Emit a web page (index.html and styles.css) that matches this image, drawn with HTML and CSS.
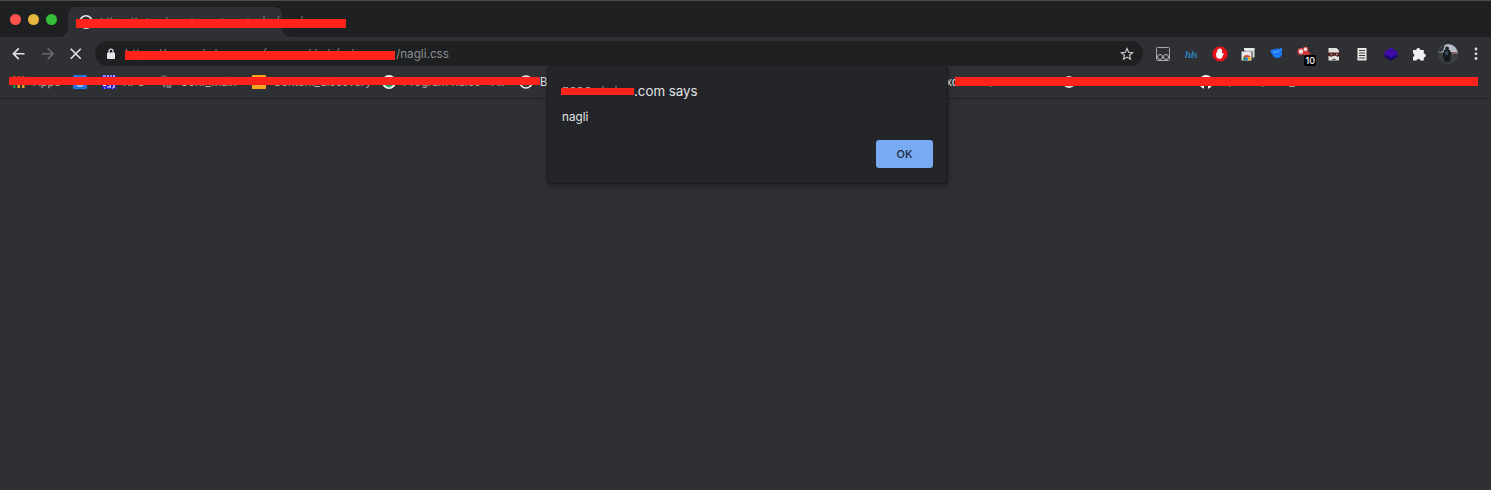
FILE: index.html
```html
<!DOCTYPE html>
<html lang="en">
<head>
<meta charset="utf-8">
<title>nagli.css</title>
<link rel="stylesheet" href="styles.css">
</head>
<body>
<div class="browser">
  <header class="tabstrip">
    <div class="lights"><i class="light close"></i><i class="light minimise"></i><i class="light expand"></i></div>
    <div class="tab">
      <svg class="spinner" width="16" height="16" viewBox="0 0 16 16"><circle cx="8" cy="8" r="6.2" fill="none" stroke="#e8eaed" stroke-width="1.6"/></svg>
      <span class="tab-title">https://</span>
      <span class="redaction tab-redaction"></span>
    </div>
    <svg class="tab-traces" width="230" height="6" viewBox="0 0 230 6"><path d="M45 3v3M65 2v4M90 3v3M120 3v3M146 3v3M162 1v5M177 1l-2 5M200 1v5" stroke="#7b7e83" fill="none"/></svg>
  </header>
  <div class="toolbar">
    <div class="nav">
      <svg class="nav-icon" viewBox="0 0 16 16"><path d="M14 8H2.8M8 2.5 2.5 8 8 13.5"/></svg>
      <svg class="nav-icon disabled" viewBox="0 0 16 16"><path d="M2 8h11.2M8 2.5 13.5 8 8 13.5"/></svg>
      <svg class="nav-icon" viewBox="0 0 16 16"><path d="m2.8 2.8 10.4 10.4M13.2 2.8 2.8 13.2"/></svg>
    </div>
    <div class="omnibox">
      <svg class="lock" width="10" height="12" viewBox="0 0 10 12"><rect x="1" y="4.5" width="8" height="6.5" rx="1" fill="#e4e6e9"/><path d="M3 5V3.2a2 2 0 0 1 4 0V5" fill="none" stroke="#e4e6e9" stroke-width="1.2"/></svg>
      <div class="address"><span class="scheme">https://</span><svg class="address-traces" width="200" height="5" viewBox="0 0 200 5"><path d="M1 3.5h6M9 3.5h5M17 3.5h4M32 1v4M44 1v4M92 4l2-4M138 1v4M144 1v4M157 1v4M165 5l2-5M181 1v4" stroke="#85888c" fill="none"/></svg><span class="redaction address-redaction"></span></div>
      <span class="path">/nagli.css</span>
      <svg class="star" width="14" height="14" viewBox="0 0 14 14"><path d="m7 1.5 1.6 3.7 4 .4-3 2.7.9 3.9L7 10.1l-3.5 2.1.9-3.9-3-2.7 4-.4z" fill="none" stroke="#d0d2d5" stroke-width="1.1"/></svg>
    </div>
    <div class="extensions">
      <svg viewBox="0 0 20 20"><rect x="3.5" y="3.5" width="13" height="13" rx="1" fill="none" stroke="#a5a7aa"/><circle cx="7" cy="13" r="2.5" fill="none" stroke="#b8babc"/><circle cx="13" cy="13" r="2.5" fill="none" stroke="#b8babc"/></svg>
      <span class="hls">hls</span>
      <svg viewBox="0 0 20 20"><path d="M7 2.7h6L17.3 7v6L13 17.3H7L2.7 13V7z" fill="#e7111c"/><path d="M6.2 8.5q.9-.6 1 .5V6q.8-.8 1.1 0V4.8q.8-.8 1.3 0v-.3q.8-.7 1.2.2v.8q.9-.7 1.2.2v4q1.4-1.1 1.8-.3l-1.6 3.8q-1 1.8-3 1.6-3-.4-3-3.2z" fill="#fff"/></svg>
      <svg viewBox="0 0 20 20"><path d="M6.5 4.5h10v9h-2v-6h-8z" fill="#dcdcdc"/><path d="M6 4h10.5v2H6zM3.5 7.5h10v9h-10z" fill="#e7e7e7"/><path d="M5 15a4 4 0 0 1 7.5-2l-3.5.5z" fill="#db4437"/><path d="m5 15 2-3 2 4.5H5z" fill="#31995c"/><path d="m9 16.5 1-3.5h2.8v3.5z" fill="#eeb725"/><circle cx="8.8" cy="14.8" r="1.6" fill="#397de0"/></svg>
      <svg viewBox="0 0 20 20"><circle cx="10.2" cy="9.3" r="4.9" fill="#1878ef"/><circle cx="5.8" cy="7.5" r="2.2" fill="#1878ef"/><path d="m6.5 8 3 .3 3-2" fill="none" stroke="#74b4ff"/><circle cx="13.8" cy="5.4" r="1.5" fill="#2787f5"/></svg>
      <span class="badged"><svg viewBox="0 0 20 20"><path d="m5 6 6-1 5 5-6 2z" fill="#c9383d"/><circle cx="6" cy="7.5" r="2.9" fill="#f4dede" stroke="#cf3b40" stroke-width="1.4"/><circle cx="10.5" cy="5.3" r="2.3" fill="#f2dcdc" stroke="#cf3b40"/></svg><b class="badge">10</b></span>
      <svg viewBox="0 0 20 20"><path d="M4.5 4h8L15 6.5v10H4.5z" fill="#e2e2df"/><path d="M3.5 8.5h13v3.2l-3 1.1-3-1.3-3 1.3-4-1z" fill="#4f2020"/><circle cx="7.3" cy="10.4" r=".8" fill="#b9a6a3"/><circle cx="12.7" cy="10.4" r=".8" fill="#b9a6a3"/><path d="m8 16 1-1.2h2l1.2 1.2z" fill="#55504d"/></svg>
      <svg viewBox="0 0 20 20"><path d="M5.5 4h9v12.5h-9z" fill="#e9e9e5"/><path d="M7 6.5h6M7 9h6M7 11.5h6M7 14h6" stroke="#36383a" stroke-width="1.2"/></svg>
      <svg viewBox="0 0 20 20"><path d="m3.3 11 6.7-4 6.7 4v1.6L10 16.5l-6.7-3.9z" fill="#1c0671"/><path d="M10 3.3 16.5 8v2.2L10 13.8l-6.5-3.6V8z" fill="#3d0ba5"/></svg>
      <svg viewBox="0 0 20 20"><path d="M4 6h3.3a2 2 0 1 1 4 0h3.5v3.5a2 2 0 1 1 0 4v3H11.5a2.1 2.1 0 0 0-4 0H4V13a2 2 0 0 0 0-3.8z" fill="#eff0f2"/></svg>
      <svg class="avatar" viewBox="0 0 20 20"><defs><clipPath id="face"><circle cx="10" cy="10" r="10"/></clipPath></defs><g clip-path="url(#face)"><path fill="#3b3e42" d="M0 0h20v20H0z"/><path fill="#b6bdc8" d="M0 3 9 0h11v9l-7-1H7L0 9z"/><path fill="#31353a" d="M0 0h7L5 7 0 9z"/><path fill="#8b6460" d="M14 8h6v2h-6z"/><path fill="#16191f" d="M6 6h6l1 5-1 7H7l-2-6z"/><circle cx="9" cy="4.5" r="2" fill="#242427"/><path fill="#34455e" d="M7 7h3v4H7z"/></g></svg>
      <svg viewBox="0 0 20 20"><g fill="#d9dbde"><circle cx="10" cy="5" r="1.4"/><circle cx="10" cy="9.8" r="1.4"/><circle cx="10" cy="14.5" r="1.4"/></g></svg>
    </div>
  </div>
  <nav class="bookmarks">
    <span class="bookmark apps"><svg viewBox="0 0 14 14"><path d="M1 1h2.5v4H1zM5.5 1H8v4H5.5zM10 1h2.5v4H10z" fill="#d13c35"/><path d="M1 5h2.5v8H1z" fill="#248a51"/><path d="M5.5 5H8v8H5.5zM10 5h2.5v8H10z" fill="#e3a329"/></svg>Apps</span>
    <span class="bookmark blue"><svg viewBox="0 0 14 14"><rect width="14" height="14" rx="1.5" fill="#2478e4"/><circle cx="7" cy="7.5" r="3.7" fill="none" stroke="#c5e1ff" stroke-width="1.3"/></svg></span>
    <span class="bookmark rfc"><svg viewBox="0 0 14 14"><path fill="#2725d0" d="M0 0h14v14H0z"/><path d="M1 1h3M6 0v2M8 1h2M12 0v2M1 10.5h3M5 12h2M8 10v3M10 13h1M12 10v3M2 13h1" fill="none" stroke="#f3f2ff" stroke-width="1.2"/></svg>RFC</span>
    <span class="bookmark conf"><svg viewBox="0 0 14 14"><circle cx="5" cy="4" r="4" fill="#56585b"/><path d="M3 8l3 4M8 8l1 5M12 8l-1 5" stroke="#77797c" stroke-width="2.2"/></svg>Conf_Main</span>
    <span class="bookmark content"><svg viewBox="0 0 14 14"><rect width="14" height="14" rx="1" fill="#f6a622"/></svg>Content_discovery</span>
    <span class="bookmark program"><svg viewBox="0 0 14 14"><circle cx="7" cy="7" r="7" fill="#eef4ef"/><circle cx="7" cy="8" r="4.4" fill="#28a358"/></svg>Program Rules - All</span>
    <span class="bookmark globe"><svg viewBox="0 0 14 14"><circle cx="7" cy="7" r="6" fill="#3b3c40" stroke="#eee" stroke-width="1.7"/></svg><span class="bright">B</span></span>
    <span class="bookmark right-label bright">xc</span>
    <span class="bookmark right-globe"><svg viewBox="0 0 14 14"><circle cx="7" cy="7" r="6" fill="#d9dadc"/></svg></span>
    <span class="bookmark github"><svg viewBox="0 0 14 14"><circle cx="7" cy="7" r="7" fill="#f7f7f7"/><path d="M5 14v-3l-2-2V5l2 1h4l2-1v4l-2 2v3z" fill="#2f3034"/></svg></span>
    <svg class="descenders" width="310" height="4" viewBox="0 0 310 4"><path d="M1 0v2M240 0v2M273 0v2M299 1.5h6" stroke="#999"/></svg>
    <span class="redaction bookmarks-left"></span><span class="redaction bookmarks-right"></span>
  </nav>
  <main class="page"></main>
  <section class="dialog" role="dialog">
    <h1 class="dialog-title"><span class="redacted-host"><svg width="73" height="12" viewBox="0 0 73 12"><path d="M42 0v9M55 0v9M2 1.5h5M10 1.5h4M17 1.5h4M25 1.5h4" stroke="#94969a" fill="none"/></svg></span>.com says</h1>
    <p class="message">nagli</p>
    <button class="ok">OK</button>
  </section>
</div>
</body>
</html>
```
FILE: styles.css
```css
* { box-sizing: border-box; }
body { margin: 0; background: #2f3034; font-family: Inter, "Liberation Sans", sans-serif; color: #e1e3e6; }
.browser { position: relative; width: 1491px; height: 490px; overflow: hidden; display: flex; flex-direction: column; background: #2f3034; }
.redaction { position: absolute; background: #ff241b; }
.tabstrip { position: relative; height: 37px; flex: none; display: flex; align-items: flex-end; background: #1e2022; border-top: 1px solid #4b4d4e; }
.lights { display: flex; gap: 7px; align-self: flex-start; padding: 12.5px 0 0 10px; width: 68px; }
.light { width: 11px; height: 11px; border-radius: 50%; flex: none; }
.close { background: #ff5350; }
.minimise { background: #e6b83d; }
.expand { background: #35bd38; }
.tab { position: relative; width: 214px; height: 30px; padding: 7px 10px; display: flex; gap: 6px; background: #2f3034; border-radius: 8px 8px 0 0; }
.tab::before, .tab::after { content: ""; position: absolute; bottom: 0; width: 8px; height: 8px; }
.tab::before { left: -8px; background: radial-gradient(circle at 0 0, transparent 7.5px, #2f3034 8px); }
.tab::after { right: -8px; background: radial-gradient(circle at 100% 0, transparent 7.5px, #2f3034 8px); }
.tab-title { font-size: 11px; line-height: 17px; color: #8d9095; }
.tab-redaction { left: 8px; top: 12px; width: 270px; height: 9px; z-index: 2; }
.tab-traces { position: absolute; left: 102px; top: 14px; }
.toolbar { height: 33px; flex: none; display: flex; align-items: center; }
.nav { width: 95px; padding-left: 11px; display: flex; gap: 13px; }
.nav-icon { width: 15.5px; height: 15.5px; flex: none; fill: none; stroke: #e1e3e6; stroke-width: 1.7; }
.disabled { stroke: #686a6e; }
.omnibox { width: 1048px; height: 25px; border-radius: 13px; background: #1e2022; display: flex; align-items: center; padding: 0 9px 0 11px; font-size: 12.2px; color: #8b8e92; }
.lock { flex: none; }
.address { position: relative; width: 271px; height: 16px; margin-left: 9px; line-height: 16px; flex: none; }
.address-traces { position: absolute; left: 47px; top: 2px; }
.address-redaction { left: 0; top: 5px; width: 270px; height: 9px; }
.path { flex: 1; font-size: 11.7px; }
.star { flex: none; }
.extensions { display: grid; grid-template-columns: repeat(12, 28.5px); margin-left: 5.5px; align-items: center; justify-items: center; }
.extensions svg { width: 20px; height: 20px; display: block; }
.hls { font: italic 700 11px/20px "Liberation Serif", serif; color: #2b83bd; letter-spacing: -.3px; }
.badged { position: relative; }
.badge { position: absolute; left: 9px; top: 11px; width: 12px; height: 11px; border-radius: 2px; background: #000; color: #fff; font: 500 9px/11px Inter, sans-serif; text-align: center; }
.bookmarks { position: relative; height: 29px; flex: none; display: flex; border-bottom: 1px solid #202124; padding: 5px 0 0 12px; font-size: 11.2px; line-height: 14px; color: #b0b2b5; }
.bookmark { display: flex; gap: 7px; flex: none; height: 14px; white-space: nowrap; overflow: hidden; }
.bookmark svg { width: 14px; height: 14px; flex: none; }
.bright { color: #e1e3e6; }
.apps { width: 61px; }
.blue { width: 29px; }
.rfc { width: 57px; }
.conf { width: 93px; }
.content { width: 130px; }
.program { width: 137px; }
.globe { width: 427px; }
.right-label { width: 116px; }
.right-globe { width: 137px; }
.github { width: 27px; }
.descenders { position: absolute; left: 990px; top: 15px; }
.bookmarks-left { left: 9px; top: 7px; width: 531px; height: 8px; }
.bookmarks-right { left: 955px; top: 7px; width: 523px; height: 9px; }
.page { flex: 1; background: #2f3034; }
.dialog { position: absolute; left: 547px; top: 66px; width: 401px; height: 118px; padding: 17px 15px 15px; display: flex; flex-direction: column; background: #242528; border: 1px solid #1b1c1e; border-top-color: #222326; border-radius: 4px; box-shadow: 0 2px 5px #0005; }
.dialog-title { margin: 0; display: flex; height: 15px; align-items: center; font-size: 13.3px; font-weight: 400; line-height: 15px; white-space: nowrap; }
.redacted-host { position: relative; width: 73px; height: 12px; margin-left: -2px; }
.redacted-host::after { content: ""; position: absolute; inset: 2px 0 3px; background: #ff241b; }
.redacted-host svg { display: block; }
.message { margin: 11px 0 15px -1px; font-size: 11.7px; line-height: 15px; }
.ok { align-self: flex-end; width: 57px; height: 28px; flex: none; border: 0; border-radius: 3px; background: #78aaf1; color: #202c3d; font: 500 11px Inter, sans-serif; padding: 0; margin-right: -1px; }
```
